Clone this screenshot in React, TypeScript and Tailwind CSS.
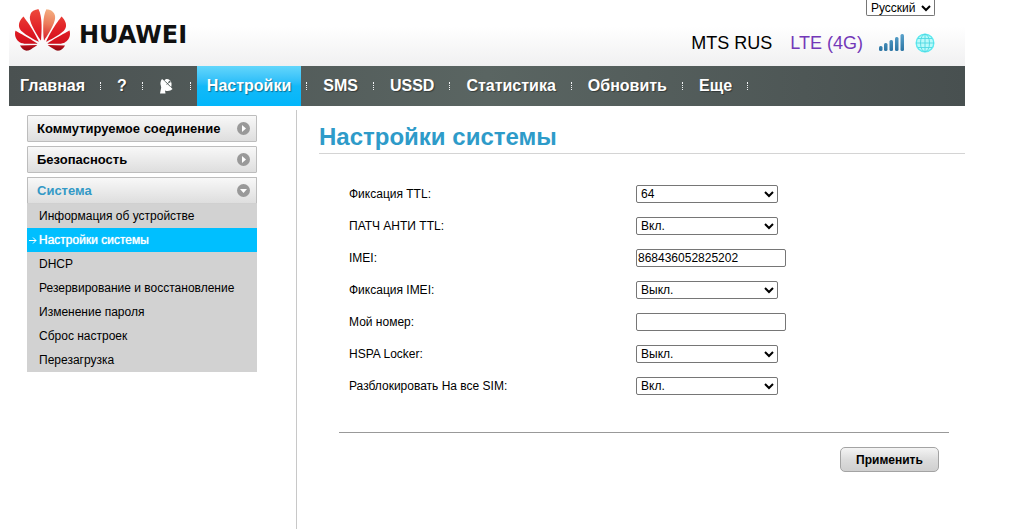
import React from 'react';

type Field = {
  id: string;
  label: string;
  type: 'select' | 'text';
  value: string;
  options?: string[];
};

const navItems = ['Главная', '?', 'dish', 'Настройки', 'SMS', 'USSD', 'Статистика', 'Обновить', 'Еще'];

const systemItems = [
  'Информация об устройстве',
  'Настройки системы',
  'DHCP',
  'Резервирование и восстановление',
  'Изменение пароля',
  'Сброс настроек',
  'Перезагрузка',
];

const fields: Field[] = [
  { id: 'ttl', label: 'Фиксация TTL:', type: 'select', value: '64', options: ['64', '65', '128'] },
  { id: 'anti-ttl', label: 'ПАТЧ АНТИ TTL:', type: 'select', value: 'Вкл.', options: ['Вкл.', 'Выкл.'] },
  { id: 'imei', label: 'IMEI:', type: 'text', value: '868436052825202' },
  { id: 'imei-fix', label: 'Фиксация IMEI:', type: 'select', value: 'Выкл.', options: ['Вкл.', 'Выкл.'] },
  { id: 'number', label: 'Мой номер:', type: 'text', value: '' },
  { id: 'hspa', label: 'HSPA Locker:', type: 'select', value: 'Выкл.', options: ['Вкл.', 'Выкл.'] },
  { id: 'sim', label: 'Разблокировать На все SIM:', type: 'select', value: 'Вкл.', options: ['Вкл.', 'Выкл.'] },
];

const LogoIcon = () => (
  <svg viewBox="0 2.9 24 18.2" className="w-[55px] h-[42px]" aria-hidden="true">
    <defs>
      <linearGradient id="petals" gradientUnits="userSpaceOnUse" x1="0" y1="3" x2="0" y2="21">
        <stop offset="0" stopColor="#ee4a3c" />
        <stop offset="0.5" stopColor="#e01f26" />
        <stop offset="0.8" stopColor="#d3101c" />
        <stop offset="1" stopColor="#8e0a12" />
      </linearGradient>
      <linearGradient id="petalLight" gradientUnits="userSpaceOnUse" x1="16" y1="3" x2="13" y2="16">
        <stop offset="0" stopColor="#f4b183" />
        <stop offset="0.5" stopColor="#ec7a5a" />
        <stop offset="1" stopColor="#d8232a" />
      </linearGradient>
    </defs>
    <g fill="url(#petals)">
      <path d="M3.67 6.14S1.82 7.91 1.72 9.78v.35c.08 1.51 1.22 2.4 1.22 2.4 1.83 1.79 6.26 4.04 7.3 4.55 0 0 .06.03.1-.01l.02-.04v-.04C7.52 10.8 3.67 6.14 3.67 6.14z" />
      <path d="M9.65 18.6c-.02-.08-.1-.08-.1-.08l-7.38.26c.8 1.43 2.15 2.53 3.56 2.2.96-.25 3.16-1.78 3.88-2.3.06-.05.04-.09.04-.09z" />
      <path d="M9.73 17.82C6.49 15.63.21 12.28.21 12.28c-.15.46-.2.9-.21 1.3v.07c0 1.07.4 1.82.4 1.82.8 1.69 2.34 2.2 2.34 2.2.7.3 1.4.31 1.4.31.12.02 4.4 0 5.54 0 .05 0 .08-.05.08-.05v-.06c0-.03-.08-.05-.08-.05z" />
      <path d="M9.06 3.19a3.42 3.42 0 0 0-2.57 3.15v.41c.03.6.16 1.05.16 1.05.66 2.9 3.86 7.65 4.55 8.65.05.05.1.03.1.03a.1.1 0 0 0 .06-.1c1.06-10.6-1.11-13.42-1.11-13.42-.32.02-1.19.23-1.19.23z" />
      <path d="M14.44 18.53s-.07 0-.09.05c0 0-.01.07.03.1.7.51 2.85 2 3.88 2.3 0 0 .16.05.43.06h.14c.69-.02 1.9-.37 3-2.26l-7.39-.25z" />
      <path d="M22.27 10.12c.14-2.06-1.94-3.97-1.94-3.98 0 0-3.85 4.66-6.67 10.8 0 0-.03.08.02.13l.04.01h.06c1.06-.53 5.46-2.77 7.28-4.54 0 0 1.15-.93 1.21-2.42z" />
      <path d="M23.79 12.26s-6.28 3.37-9.52 5.55c0 0-.05.04-.03.11 0 0 .03.06.07.06 1.16 0 5.56 0 5.67-.02 0 0 .57-.02 1.27-.29 0 0 1.56-.5 2.37-2.27 0 0 .73-1.45.17-3.14z" />
    </g>
    <path
      fill="url(#petalLight)"
      d="M17.36 5.46s-.49-1.8-2.44-2.28c0 0-.57-.14-1.17-.22 0 0-2.18 2.81-1.12 13.43.01.07.06.08.06.08.07.03.1-.03.1-.03.72-1.03 3.9-5.76 4.55-8.64 0 0 .36-1.4.02-2.34z"
    />
  </svg>
);

const DishIcon = () => (
  <svg viewBox="0 0 16 16" className="w-4 h-4" aria-hidden="true">
    <path
      fill="#fff"
      d="M3 1C1.500 3 1 5.500 1.800 7.500l.4 2L1 15.500h5.500L6 12.500c2.500 1 5.500.6 7.600-1.400L12 9.500c1-2.500.8-5.500-1-7.200C9.500 1 8 .8 6.500 1.200L5.500 3z"
    />
    <path stroke="#56605e" strokeWidth="1" fill="none" d="M6 3.200l5.600 5.600M7.600 6.400L10.400 4" />
    <circle cx="10.600" cy="3.800" r="1" fill="#56605e" />
  </svg>
);

const SignalIcon = () => (
  <svg viewBox="0 0 25 18" className="w-[25px] h-[18px]" role="img" aria-label="Уровень сигнала">
    <defs>
      <linearGradient id="bars" gradientUnits="userSpaceOnUse" x1="0" y1="0" x2="0" y2="17">
        <stop offset="0" stopColor="#5aa3cc" />
        <stop offset="1" stopColor="#2b74a3" />
      </linearGradient>
    </defs>
    <g fill="url(#bars)">
      <rect x="0" y="12" width="3.500" height="5" rx="1.500" />
      <rect x="5" y="9" width="3.500" height="8" rx="1.500" />
      <rect x="10.500" y="6" width="3.500" height="11" rx="1.500" />
      <rect x="16" y="3" width="3.500" height="14" rx="1.500" />
      <rect x="21.500" y="0" width="3.500" height="17" rx="1.500" />
    </g>
  </svg>
);

const GlobeIcon = () => (
  <svg viewBox="0 0 20 20" className="w-5 h-5" role="img" aria-label="Интернет">
    <circle cx="10" cy="10" r="8.800" fill="#b9fafa" stroke="#5ce9ef" strokeWidth="1.400" />
    <g fill="none" stroke="#4fd8e2" strokeWidth="0.900">
      <ellipse cx="10" cy="10" rx="4.500" ry="8.800" />
      <path d="M10 1v18M1 10h18M3 5.500h14M3 14.500h14" />
    </g>
  </svg>
);

const ArrowBadge = ({ down }: { down?: boolean }) => (
  <svg viewBox="0 0 13 13" className="w-[13px] h-[13px]" aria-hidden="true">
    <circle cx="6.500" cy="6.500" r="6.500" fill="#999" />
    <path fill="#fff" d={down ? 'M3 5h7L6.500 9z' : 'M5 3v7l4-3.500z'} />
  </svg>
);

const Separator = () => (
  <span className="flex w-3 pl-[5px]">
    <span className="h-2 border-l border-dotted border-gray-100"></span>
  </span>
);

const MenuHeading = ({ title, open }: { title: string; open?: boolean }) => (
  <button
    type="button"
    aria-expanded={!!open}
    className={`flex w-full h-[27px] items-center justify-between rounded-[1px] border border-[#bdbdbd] bg-linear-to-b from-[#f8f8f8] to-[#dedede] pl-[9px] pr-[6px] text-[13px] font-bold ${
      open ? 'border-b-[#d0d0d0] text-[#3399c6]' : 'text-black'
    }`}
  >
    <span>{title}</span>
    <ArrowBadge down={open} />
  </button>
);

const Header = () => (
  <header className="flex h-[66px] justify-between bg-linear-to-b from-white from-40% to-[#f0f0f1] pl-[6px] pr-[30px]">
    <div className="flex items-center gap-[9px] pb-[7px]">
      <LogoIcon />
      <span className="pt-[10px] font-['DejaVu_Sans',sans-serif] text-[24px] leading-6 font-bold text-[#111]">HUAWEI</span>
    </div>
    <div className="flex flex-col items-end">
      <select
        aria-label="Язык"
        defaultValue="Русский"
        className="h-4 w-[69px] rounded-b-[2px] border border-t-0 border-[#767676] bg-white text-[12px] text-black"
      >
        <option>Русский</option>
        <option>English</option>
      </select>
      <div className="flex items-center pt-[15px] text-[18px] leading-6">
        <span>MTS RUS</span>
        <span className="ml-[18px] mr-4 text-[#7338b8]">LTE (4G)</span>
        <SignalIcon />
        <span className="ml-[11px]">
          <GlobeIcon />
        </span>
      </div>
    </div>
  </header>
);

const NavBar = () => (
  <nav className="flex h-10 items-center bg-linear-to-r from-[#4a5151] via-[#5a6562] to-[#485050] pl-px text-[16px] font-bold text-white">
    {navItems.map((item) => (
      <React.Fragment key={item}>
        <a
          href="#"
          aria-label={item === 'dish' ? 'Антенна' : undefined}
          className={`flex h-full items-center px-[10px] [text-shadow:1px_1px_1px_#0006] ${
            item === 'Настройки' ? 'bg-linear-to-b from-[#62d6fb] via-[#12b9f8] to-[#02b6fa]' : ''
          }`}
        >
          {item === 'dish' ? <DishIcon /> : item}
        </a>
        <Separator />
      </React.Fragment>
    ))}
  </nav>
);

const Sidebar = () => (
  <aside className="flex w-[230px] shrink-0 flex-col gap-1 pt-[5px]">
    <MenuHeading title="Коммутируемое соединение" />
    <MenuHeading title="Безопасность" />
    <div>
      <MenuHeading title="Система" open />
      <ul className="bg-[#d2d2d2] text-[12px] leading-6">
        {systemItems.map((item) => {
          const active = item === 'Настройки системы';
          return (
            <li key={item}>
              <a
                href="#"
                className={`flex items-center ${active ? 'bg-[#00bfff] pl-[2px] text-white [text-shadow:0_0_1px_#fff]' : 'pl-3'}`}
              >
                {active && (
                  <svg viewBox="0 0 8 7" className="mr-[2px] h-[7px] w-2" fill="none" stroke="#fff" aria-hidden="true">
                    <path d="M0 3.500h7M4 .5l3 3-3 3" />
                  </svg>
                )}
                {item}
              </a>
            </li>
          );
        })}
      </ul>
    </div>
  </aside>
);

const SettingsForm = () => (
  <form onSubmit={(e) => e.preventDefault()}>
    <div className="pt-6 pl-[30px] text-[12px]">
      {fields.map((field) => (
        <div key={field.id} className="flex h-8 items-center">
          <label htmlFor={field.id} className="w-[287px]">
            {field.label}
          </label>
          {field.type === 'select' ? (
            <select
              id={field.id}
              defaultValue={field.value}
              className="h-[18px] w-[142px] rounded-[2px] border border-[#767676] bg-white text-black"
            >
              {field.options?.map((option) => (
                <option key={option}>{option}</option>
              ))}
            </select>
          ) : (
            <input
              id={field.id}
              type="text"
              defaultValue={field.value}
              className="h-[18px] w-[150px] rounded-[2px] border border-[#767676] bg-white px-px text-black"
            />
          )}
        </div>
      ))}
    </div>
    <div className="mt-[30px] mr-4 ml-5 flex justify-end border-t border-[#999] pt-[14px] pr-[10px]">
      <button
        type="submit"
        className="h-[25px] w-[99px] rounded-[5px] border border-[#a3a3a3] bg-linear-to-b from-[#f4f4f4] via-[#dcdcdc] to-[#cfcfcf] text-[12px] font-bold text-black"
      >
        Применить
      </button>
    </div>
  </form>
);

const App: React.FC = () => {
  return (
    <div className="flex min-h-screen flex-col bg-white pr-[62px] pl-[9px] font-['Liberation_Sans',Arial,sans-serif] text-black">
      <Header />
      <NavBar />
      <div className="flex flex-1 pt-1 pl-[18px]">
        <Sidebar />
        <main className="ml-[39px] flex-1 border-l border-[#c8c8c8] pl-[22px]">
          <h1 className="border-b border-[#d4d4d4] pt-[11px] text-[24px] leading-8 font-bold text-[#2e9bc9]">
            Настройки системы
          </h1>
          <SettingsForm />
        </main>
      </div>
    </div>
  );
};

export default App;
